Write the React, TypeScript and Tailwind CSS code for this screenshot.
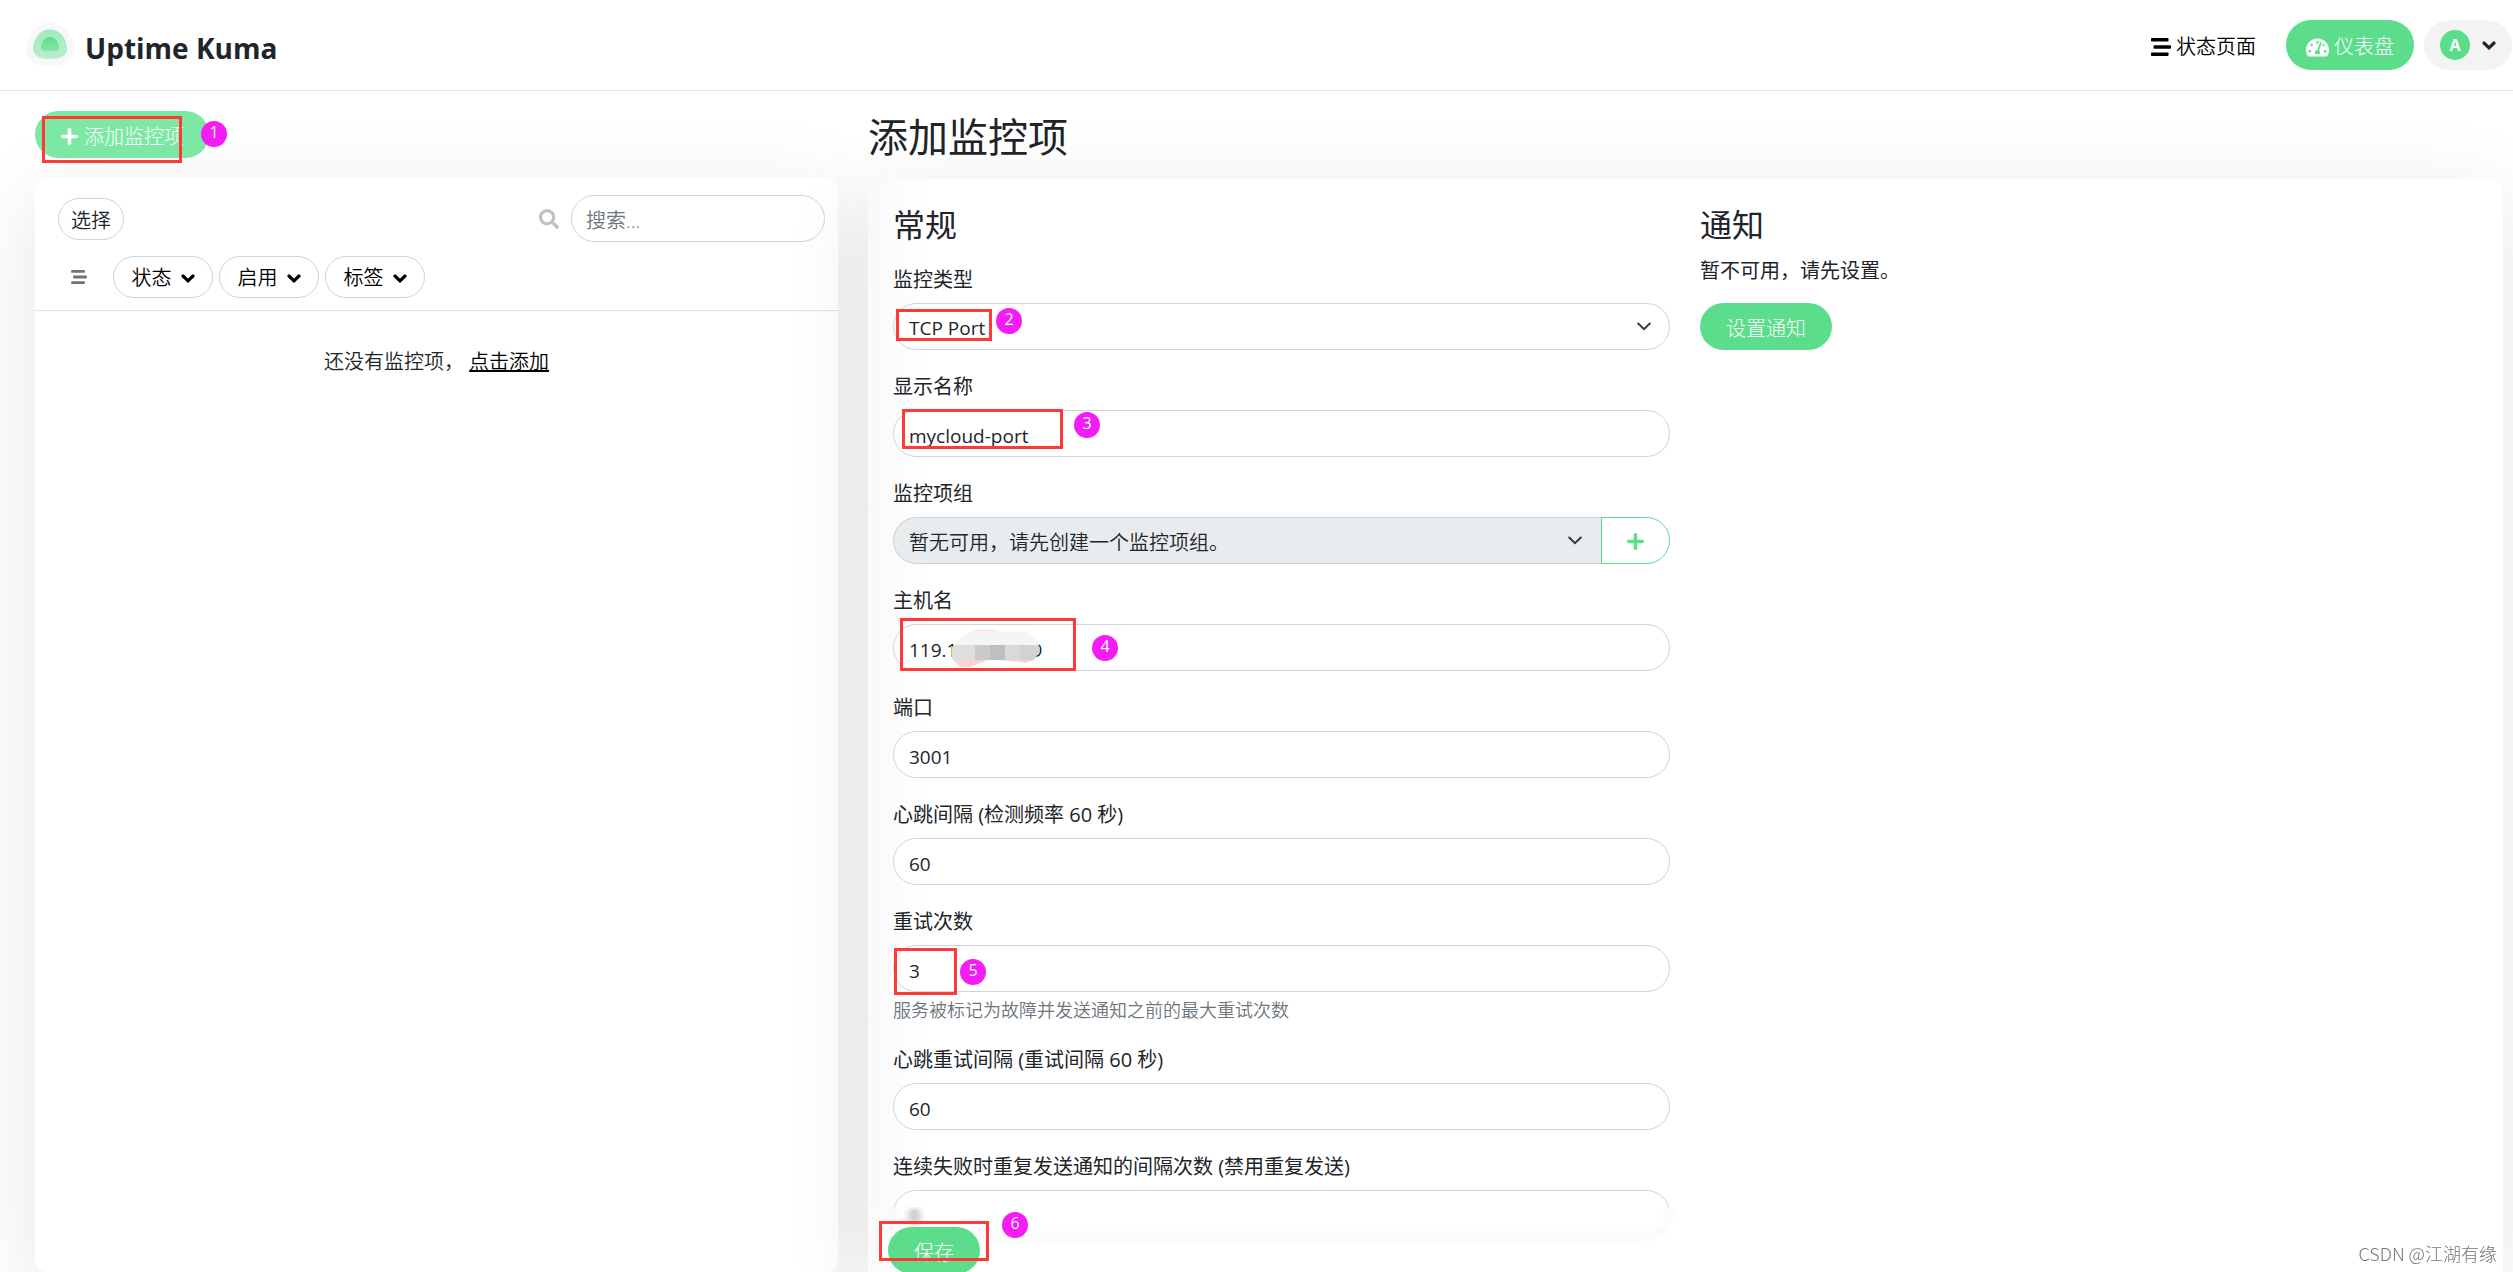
import { useId, type ReactNode } from 'react'
import { FaPlus, FaSearch, FaTachometerAlt } from 'react-icons/fa'

const inputClass =
  'h-[47px] w-full rounded-full border border-[#ced4da] bg-white pt-1 pr-4 pl-[15px] text-[19px] text-[#212529] outline-none'

const primaryButton =
  'flex items-center justify-center rounded-full pt-1 text-[20px] font-light text-white'

const Logo = () => (
  <svg width="48" height="46" viewBox="0 0 48 46" aria-hidden="true">
    <defs>
      <linearGradient id="logo-fill" x1="0" y1="0" x2="0" y2="1">
        <stop offset="0" stopColor="#5cdd8b" />
        <stop offset="1" stopColor="#86e6a9" />
      </linearGradient>
    </defs>
    <path d="M24 0C38 0 48 15 48 27C48 40 37 44 24 44S0 40 0 27C0 15 10 0 24 0Z" fill="#f8f8f8" />
    <path
      d="M24 7.500C35 7.500 41 18 41 27C41 34 34 37 24 37S7 34 7 27C7 18 13 7.500 24 7.500Z"
      fill="url(#logo-fill)"
      opacity="0.55"
    />
    <path
      d="M24 15C30 15 33 21 33 26C33 28.500 29 29 24 29S15 28.500 15 26C15 21 18 15 24 15Z"
      fill="url(#logo-fill)"
    />
  </svg>
)

// Three staggered bars
const StreamIcon = ({ className }: { className: string }) => (
  <svg className={className} viewBox="0 0 20 18" fill="currentColor" aria-hidden="true">
    <rect x="0" y="0" width="17.500" height="3.600" rx="0.800" />
    <rect x="2.500" y="7.200" width="17.500" height="3.600" rx="0.800" />
    <rect x="0" y="14.400" width="17.500" height="3.600" rx="0.800" />
  </svg>
)

const Caret = () => (
  <svg className="h-[9px] w-[14px] shrink-0" viewBox="0 0 14 9" fill="none" aria-hidden="true">
    <path d="M2 2L7 6.800L12 2" stroke="currentColor" strokeWidth="3.200" strokeLinecap="round" />
  </svg>
)

const SelectCaret = () => (
  <svg
    className="pointer-events-none absolute top-[19px] right-[19px] h-[9px] w-[14px]"
    viewBox="0 0 14 9"
    fill="none"
    aria-hidden="true"
  >
    <path d="M1.200 1.500L7 7.200L12.800 1.500" stroke="#343a40" strokeWidth="2" strokeLinecap="round" />
  </svg>
)

// Annotations drawn over the page
const Marker = ({ n, className }: { n: number; className: string }) => (
  <span
    className={`absolute z-30 flex size-[26px] items-center justify-center rounded-full bg-[#f41cf4] pb-1 text-[16px] leading-none text-white ${className}`}
  >
    {n}
  </span>
)

const Outline = ({ className }: { className: string }) => (
  <span className={`pointer-events-none absolute z-30 border-3 border-[#ff3838] ${className}`} />
)

const Label = ({ htmlFor, children }: { htmlFor: string; children: ReactNode }) => (
  <label htmlFor={htmlFor} className="mb-[7px] block leading-[32px]">
    {children}
  </label>
)

const Field = ({
  label,
  value,
  help,
  children,
}: {
  label: string
  value: string
  help?: string
  children?: ReactNode
}) => {
  const id = useId()
  return (
    <div className="mb-[21px]">
      <Label htmlFor={id}>{label}</Label>
      <div className="relative">
        <input id={id} type="text" defaultValue={value} className={inputClass} />
        {children}
      </div>
      {help && <div className="mt-[5px] text-[18px] leading-[26px] font-[350] text-[#6c757d]">{help}</div>}
    </div>
  )
}

const Header = () => (
  <header className="flex h-[91px] items-center justify-between border-b border-[#dee2e6] pr-px pl-[26px]">
    <a href="#" className="flex items-center gap-[11px]">
      <Logo />
      <span className="pt-[6px] text-[28px] leading-[40px] font-bold">Uptime Kuma</span>
    </a>
    <nav className="flex items-center gap-[10px]">
      <a href="#" className="mr-[20px] flex items-center gap-[5px] pt-1 font-[350] text-black">
        <StreamIcon className="h-[18px] w-[20px]" />
        状态页面
      </a>
      <a href="#" className={`${primaryButton} h-[50px] gap-[5px] bg-[#5cdd8b] px-[20px]`}>
        <FaTachometerAlt className="size-[23px]" />
        仪表盘
      </a>
      <button type="button" className="flex h-[50px] items-center gap-[12px] rounded-full bg-[#f3f3f3] px-[16px]">
        <span className="flex size-[30px] items-center justify-center rounded-full bg-[#5cdd8b] text-[16px] font-bold text-white">
          A
        </span>
        <Caret />
      </button>
    </nav>
  </header>
)

const filters = ['状态', '启用', '标签']

const MonitorList = () => (
  <section className="flex flex-1 flex-col rounded-[12px] bg-white shadow-[0_19px_88px_rgba(0,0,0,0.1)]">
    <div className="border-b border-[#dee2e6] px-[13px] pt-[17px] pb-[12px]">
      <div className="flex items-center justify-between pl-[10px]">
        <button type="button" className="h-[42px] rounded-full border border-[#ced4da] px-[12px] pt-1 font-[350]">
          选择
        </button>
        <form className="flex items-center gap-[12px]">
          <FaSearch className="size-[20px] text-[#c0c0c0]" />
          <input
            type="search"
            aria-label="搜索"
            placeholder="搜索..."
            className="h-[47px] w-[254px] rounded-full border border-[#ced4da] bg-white pt-1 pl-[14px] text-[20px] font-[350] outline-none placeholder:text-[#6c757d]"
          />
        </form>
      </div>
      <div className="mt-[14px] flex items-center gap-[6px] pl-[23px]">
        <button type="button" aria-label="菜单" className="mr-[20px] text-[#6c757d]">
          <StreamIcon className="h-[14px] w-[16px]" />
        </button>
        {filters.map(f => (
          <button
            key={f}
            type="button"
            className="flex h-[42px] w-[100px] items-center justify-center gap-[9px] rounded-full border border-[#ced4da] pt-0.5 font-[350] text-black"
          >
            {f}
            <Caret />
          </button>
        ))}
      </div>
    </div>
    <p className="mt-[36px] text-center leading-[30px] font-[350]">
      还没有监控项，{' '}
      <a href="#" className="text-black underline">
        点击添加
      </a>
    </p>
  </section>
)

const GroupField = () => (
  <div className="mb-[21px]">
    <Label htmlFor="group">监控项组</Label>
    <div className="flex">
      <div className="relative flex-1">
        <select
          id="group"
          disabled
          className="h-[47px] w-full appearance-none rounded-l-full border border-r-0 border-[#ced4da] bg-[#e9ecef] pt-1 pl-[15px] text-[20px] font-[350] text-[#212529] opacity-100"
        >
          <option>暂无可用，请先创建一个监控项组。</option>
        </select>
        <SelectCaret />
      </div>
      <button
        type="button"
        aria-label="添加监控项组"
        className="flex h-[47px] w-[69px] items-center justify-center rounded-r-full border border-[#5cdd8b] pt-0.5 text-[#5cdd8b]"
      >
        <FaPlus className="size-[19px]" />
      </button>
    </div>
  </div>
)

// Pixelated patch that hides most of the address
const Censor = () => (
  <svg className="absolute top-[5px] left-[57px] h-[40px] w-[92px]" viewBox="0 0 92 40" aria-hidden="true">
    <clipPath id="censor">
      <path d="M2 18L14 6L26 1H44L54 3L76 2L88 12L90 22L84 31L76 34L50 31H38L20 38H10L2 30Z" />
    </clipPath>
    <g clipPath="url(#censor)">
      <rect width="92" height="16" fill="#f5f5f5" />
      <rect x="24" width="20" height="2" fill="#fdd2d2" />
      <rect y="16" width="25" height="15" fill="#dedede" />
      <rect x="25" y="16" width="15" height="15" fill="#c9cacb" />
      <rect x="40" y="16" width="15" height="15" fill="#bebfc0" />
      <rect x="55" y="16" width="15" height="15" fill="#d8d9da" />
      <rect x="70" y="16" width="22" height="15" fill="#d0d2d4" />
      <rect y="31" width="92" height="9" fill="#fdd2d2" />
    </g>
  </svg>
)

const General = () => (
  <div>
    <h2 className="mb-[20px] text-[32px] leading-[38px]">常规</h2>
    <div className="mb-[21px]">
      <Label htmlFor="type">监控类型</Label>
      <div className="relative">
        <select id="type" className={`${inputClass} appearance-none`}>
          <option>TCP Port</option>
        </select>
        <SelectCaret />
        <Outline className="top-[6px] left-[3px] h-[32px] w-[96px]" />
        <Marker n={2} className="top-[5px] left-[103px]" />
      </div>
    </div>
    <Field label="显示名称" value="mycloud-port">
      <Outline className="-top-px left-[9px] h-[40px] w-[161px]" />
      <Marker n={3} className="top-[2px] left-[181px]" />
    </Field>
    <GroupField />
    <Field label="主机名" value="119.1               9">
      <Censor />
      <Outline className="-top-[6px] left-[7px] h-[53px] w-[176px]" />
      <Marker n={4} className="top-[11px] left-[199px]" />
    </Field>
    <Field label="端口" value="3001" />
    <Field label="心跳间隔 (检测频率 60 秒)" value="60" />
    <Field label="重试次数" value="3" help="服务被标记为故障并发送通知之前的最大重试次数">
      <Outline className="top-[3px] left-px h-[47px] w-[63px]" />
      <Marker n={5} className="top-[14px] left-[67px]" />
    </Field>
    <Field label="心跳重试间隔 (重试间隔 60 秒)" value="60" />
    <Field label="连续失败时重复发送通知的间隔次数 (禁用重复发送)" value="0" />
  </div>
)

const Notifications = () => (
  <div>
    <h2 className="mb-[11px] text-[32px] leading-[38px]">通知</h2>
    <p className="mb-[16px] leading-[32px]">暂不可用，请先设置。</p>
    <button type="button" className={`${primaryButton} h-[47px] bg-[#5cdd8b] px-[26px]`}>
      设置通知
    </button>
  </div>
)

const EditForm = () => (
  <form className="flex min-h-0 flex-1 rounded-[12px] shadow-[0_19px_88px_rgba(0,0,0,0.1)]">
    <div className="flex-1 overflow-hidden rounded-t-[12px] bg-linear-to-r from-[#f9f9f9] to-white to-4%">
      <div className="grid grid-cols-[777fr_778fr] gap-x-[30px] px-[25px] pt-[27px]">
        <General />
        <Notifications />
      </div>
    </div>
    <div className="absolute inset-x-0 bottom-0 z-20 h-[65px] bg-white/20 px-[20px] pt-[20px] backdrop-blur-[3px]">
      <button type="submit" className={`${primaryButton} h-[47px] bg-[#5cdd8b] px-[26px]`}>
        保存
      </button>
      <Outline className="top-[14px] left-[11px] h-[40px] w-[110px]" />
      <Marker n={6} className="top-[5px] left-[134px]" />
    </div>
  </form>
)

const App = () => (
  <div className="flex h-screen flex-col overflow-hidden bg-white font-['Open_Sans','Noto_Sans_CJK_SC',sans-serif] text-[20px] text-[#212529]">
    <Header />
    <main className="relative grid min-h-0 flex-1 grid-cols-[803fr_1635fr] gap-x-[30px] pr-[10px] pl-[35px]">
      <div className="flex flex-col pt-[20px]">
        <div className="relative mb-[20px] self-start">
          <button type="button" className={`${primaryButton} h-[47px] gap-[5px] bg-[#7ce8a4] px-[25px]`}>
            <FaPlus className="size-[19px]" />
            添加监控项
          </button>
          <Outline className="top-[5px] left-[7px] h-[47px] w-[140px]" />
          <Marker n={1} className="top-[10px] left-[166px]" />
        </div>
        <MonitorList />
      </div>
      <div className="relative flex min-h-0 flex-col pt-[22px]">
        <h1 className="mb-[18px] text-[40px] leading-[48px]">添加监控项</h1>
        <EditForm />
      </div>
      <span className="absolute right-[16px] bottom-[6px] z-30 font-['Noto_Sans_CJK_SC',sans-serif] text-[18px] leading-[26px] font-light text-[#777]">
        CSDN @江湖有缘
      </span>
    </main>
  </div>
)

export default App
